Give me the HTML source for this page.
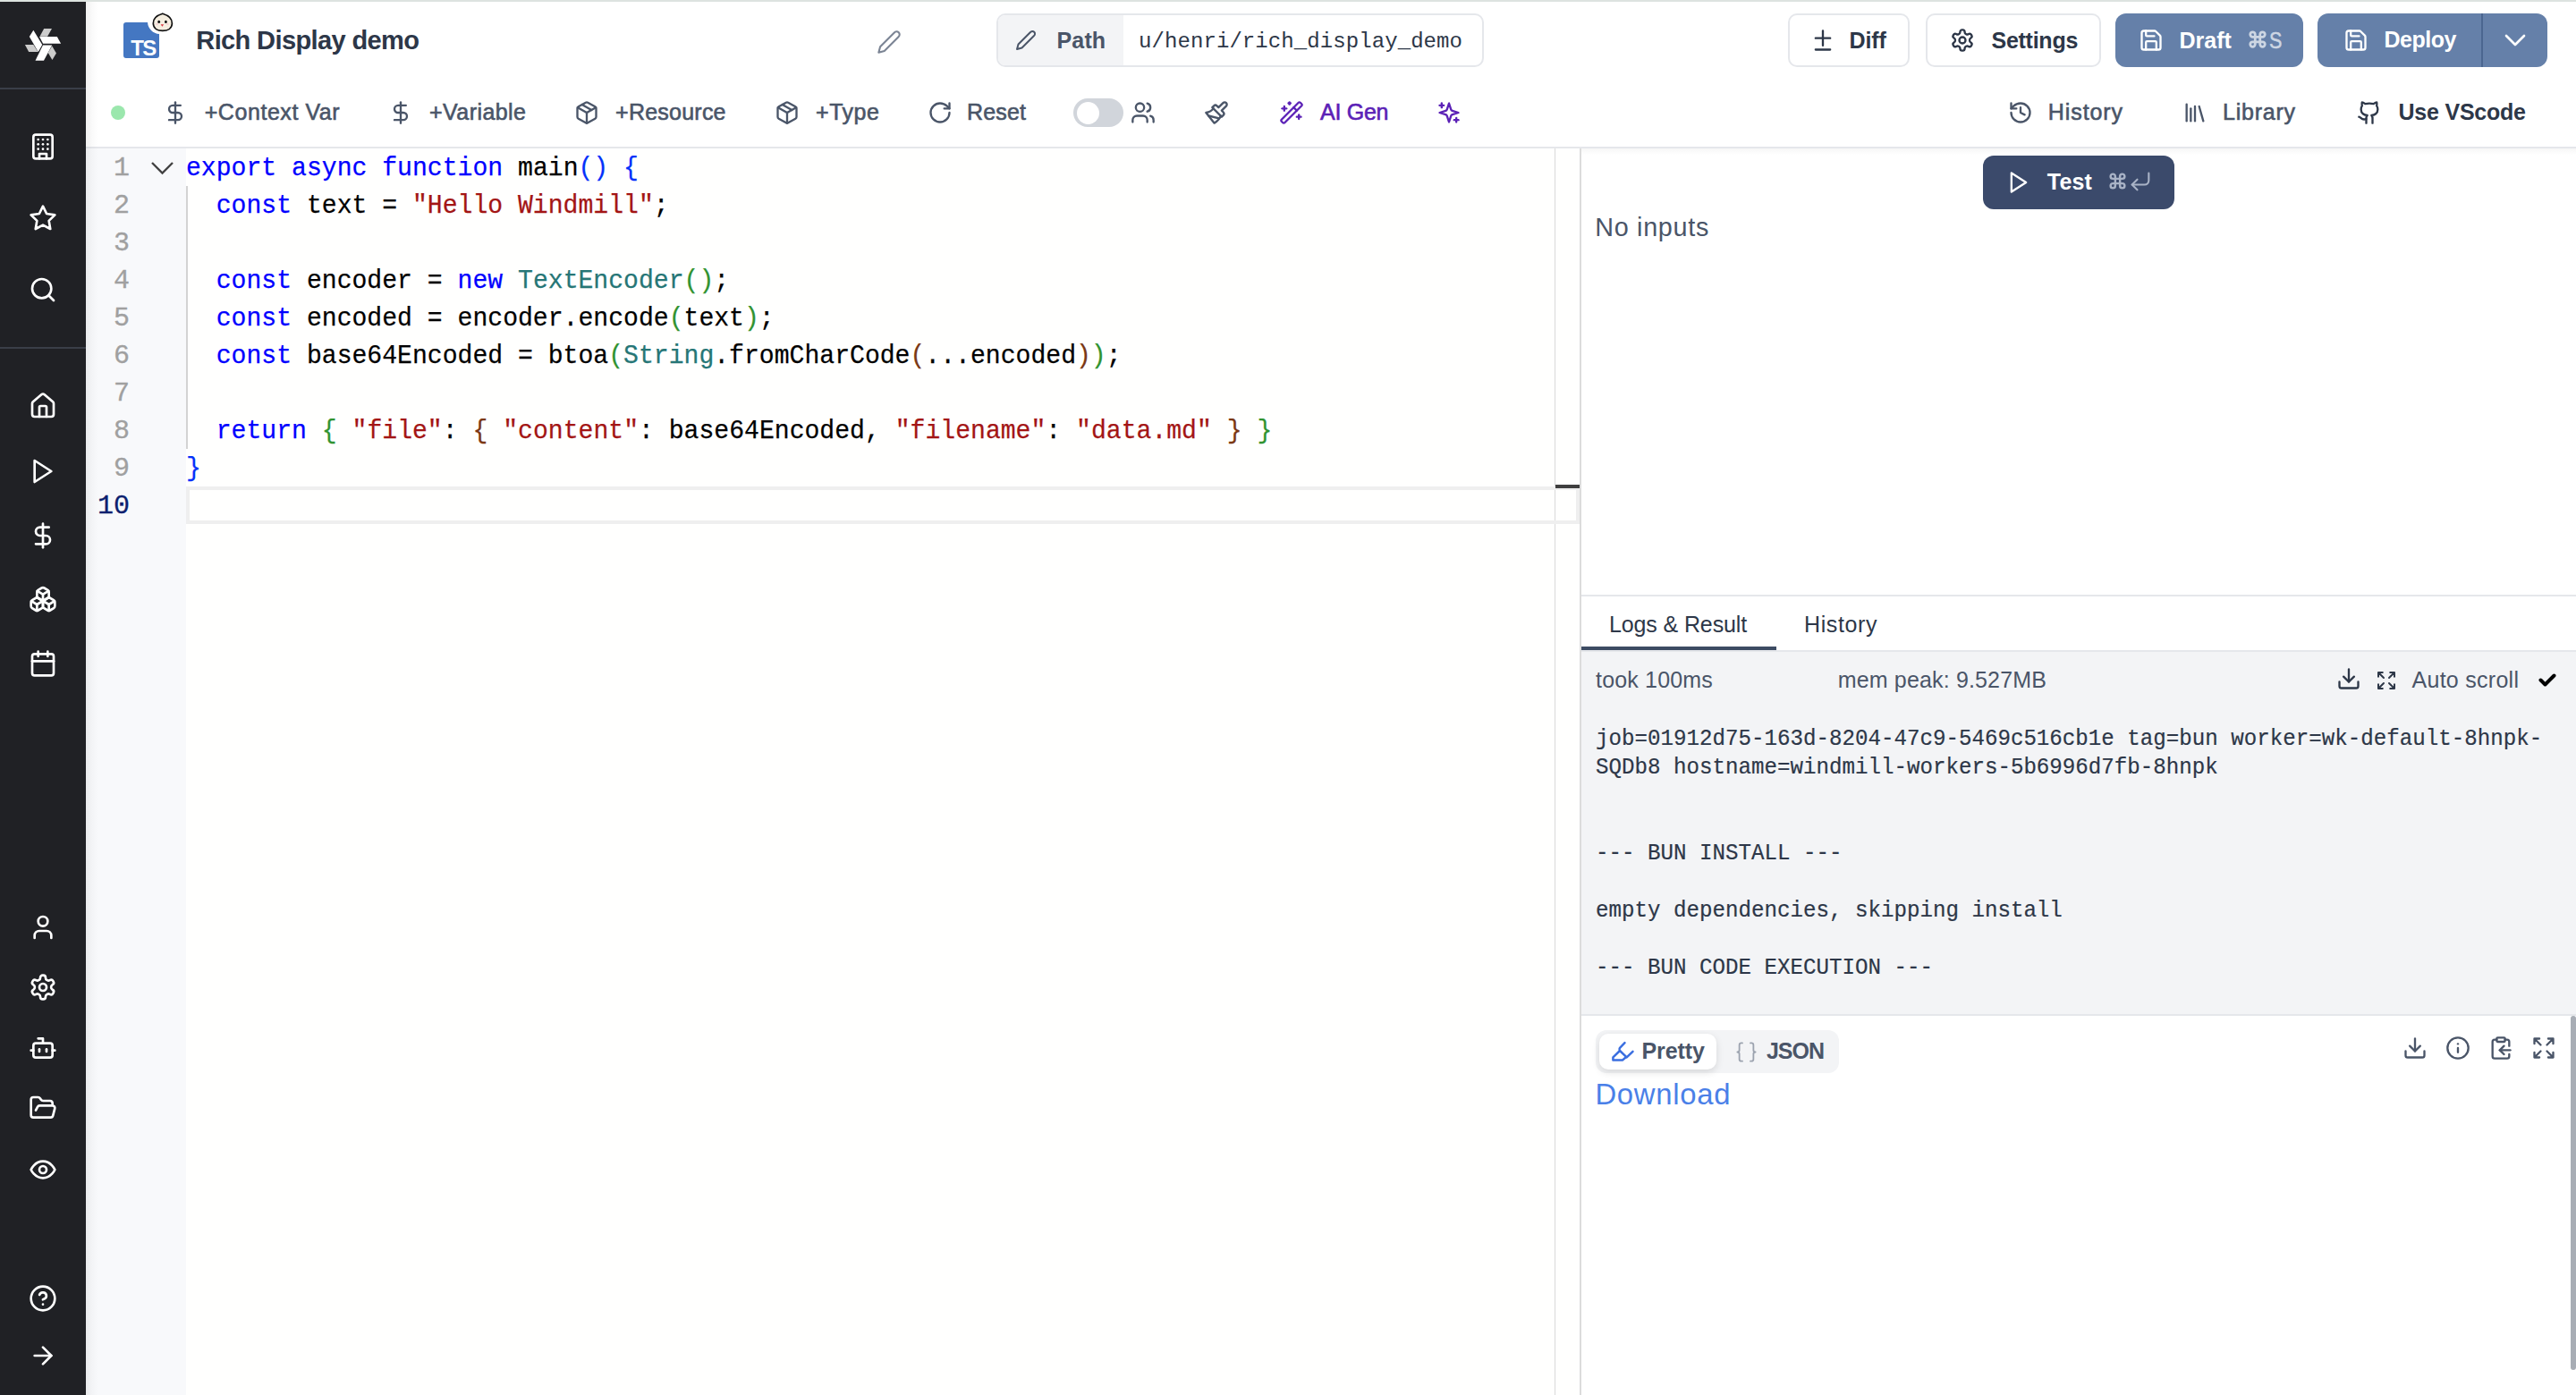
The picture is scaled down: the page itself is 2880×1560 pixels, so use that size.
<!DOCTYPE html>
<html><head><meta charset="utf-8"><title>Rich Display demo</title>
<style>
html,body{margin:0;padding:0}
body{width:2880px;height:1560px;overflow:hidden;position:relative;background:#ffffff;font-family:"Liberation Sans",sans-serif}
.b{position:absolute}
.i{position:absolute;overflow:visible}
.t{position:absolute;white-space:nowrap}
.code{position:absolute;left:208px;font-family:"Liberation Mono",monospace;font-size:30px;line-height:28px;white-space:pre;color:#000;transform:scaleX(0.9367);transform-origin:0 0;-webkit-text-stroke:0.25px currentColor}
.code i{font-style:normal}
.k{color:#0000ff}.s{color:#a31515}.ty{color:#267676}.b1{color:#0431fa}.b2{color:#319331}.b3{color:#7b3814}
.ln{position:absolute;left:60px;width:85px;text-align:right;font-family:"Liberation Mono",monospace;font-size:30px;line-height:28px;-webkit-text-stroke:0.3px currentColor}
.log{position:absolute;left:1784px;font-family:"Liberation Mono",monospace;font-size:26px;line-height:24px;white-space:pre;color:#2d3748;transform:scaleX(0.9291);transform-origin:0 0;-webkit-text-stroke:0.2px currentColor}
</style></head><body>
<div class="b" style="left:0px;top:0px;width:2880px;height:2px;background:#dde3e0"></div>
<div class="b" style="left:0px;top:2px;width:96px;height:1558px;background:#202125"></div>
<div class="b" style="left:0px;top:98px;width:96px;height:2px;background:#3a3e48"></div>
<div class="b" style="left:0px;top:388px;width:96px;height:2px;background:#3a3e48"></div>
<div class="b" style="left:96px;top:166px;width:1670px;height:1394px;background:#fffffe"></div>
<div class="b" style="left:96px;top:166px;width:112px;height:1394px;background:#f8f9fb"></div>
<div class="b" style="left:96px;top:164px;width:2784px;height:2px;background:#e5e7eb"></div>
<div class="b" style="left:1766px;top:166px;width:2px;height:1394px;background:#dcdcdc"></div>
<div class="b" style="left:1768px;top:166px;width:1112px;height:7px;background:linear-gradient(rgba(0,0,0,0.035), rgba(0,0,0,0))"></div>
<div class="b" style="left:1738px;top:166px;width:1px;height:1394px;background:#d9d9d9"></div>
<div class="b" style="left:208px;top:544px;width:1558px;height:42px;box-sizing:border-box;border:4px solid #efefef"></div>
<div class="b" style="left:1739px;top:542px;width:27px;height:4px;background:#3f3f3f"></div>
<div class="b" style="left:208px;top:208px;width:2px;height:294px;background:#d3d3d3"></div>
<div class="b" style="left:96px;top:2px;width:14px;height:1558px;background:linear-gradient(to right, rgba(0,0,0,0.06), rgba(0,0,0,0.02) 50%, rgba(0,0,0,0))"></div>
<svg class="i" style="left:18px;top:20px" width="60" height="60" viewBox="0 0 1395 1395">
<g fill="#ffffff"><polygon points="345,490 450,322 680,700 575,885"/><polygon points="605,490 1065,490 1165,670 700,670"/><polygon points="697,708 935,708 720,1112 500,1112"/></g>
<g fill="#cccccc"><polygon points="615,480 725,280 930,280 815,480"/><polygon points="230,700 450,700 570,885 330,885"/><polygon points="935,730 1045,920 940,1090 830,905"/></g></svg>
<svg class="i" style="left:32.0px;top:148.0px" width="32" height="32" viewBox="0 0 24 24" fill="none" stroke="#ffffff" stroke-width="2" stroke-linecap="round" stroke-linejoin="round"><rect width="16" height="20" x="4" y="2" rx="2" ry="2"/><path d="M9 22v-4h6v4"/><path d="M8 6h.01"/><path d="M16 6h.01"/><path d="M12 6h.01"/><path d="M12 10h.01"/><path d="M12 14h.01"/><path d="M16 10h.01"/><path d="M16 14h.01"/><path d="M8 10h.01"/><path d="M8 14h.01"/></svg>
<svg class="i" style="left:32.0px;top:227.5px" width="32" height="32" viewBox="0 0 24 24" fill="none" stroke="#ffffff" stroke-width="2" stroke-linecap="round" stroke-linejoin="round"><polygon points="12 2 15.09 8.26 22 9.27 17 14.14 18.18 21.02 12 17.77 5.82 21.02 7 14.14 2 9.27 8.91 8.26 12 2"/></svg>
<svg class="i" style="left:32.0px;top:308.0px" width="32" height="32" viewBox="0 0 24 24" fill="none" stroke="#ffffff" stroke-width="2" stroke-linecap="round" stroke-linejoin="round"><circle cx="11" cy="11" r="8"/><path d="m21 21-4.3-4.3"/></svg>
<svg class="i" style="left:32.0px;top:438.0px" width="32" height="32" viewBox="0 0 24 24" fill="none" stroke="#ffffff" stroke-width="2" stroke-linecap="round" stroke-linejoin="round"><path d="M15 21v-8a1 1 0 0 0-1-1h-4a1 1 0 0 0-1 1v8"/><path d="M3 10a2 2 0 0 1 .709-1.528l7-5.999a2 2 0 0 1 2.582 0l7 5.999A2 2 0 0 1 21 10v9a2 2 0 0 1-2 2H5a2 2 0 0 1-2-2z"/></svg>
<svg class="i" style="left:32.0px;top:510.5px" width="32" height="32" viewBox="0 0 24 24" fill="none" stroke="#ffffff" stroke-width="2" stroke-linecap="round" stroke-linejoin="round"><polygon points="5 3 19 12 5 21 5 3"/></svg>
<svg class="i" style="left:32.0px;top:582.7px" width="32" height="32" viewBox="0 0 24 24" fill="none" stroke="#ffffff" stroke-width="2" stroke-linecap="round" stroke-linejoin="round"><line x1="12" x2="12" y1="2" y2="22"/><path d="M17 5H9.5a3.5 3.5 0 0 0 0 7h5a3.5 3.5 0 0 1 0 7H6"/></svg>
<svg class="i" style="left:32.0px;top:654.0px" width="32" height="32" viewBox="0 0 24 24" fill="none" stroke="#ffffff" stroke-width="2" stroke-linecap="round" stroke-linejoin="round"><path d="M2.97 12.92A2 2 0 0 0 2 14.63v3.24a2 2 0 0 0 .97 1.71l3 1.8a2 2 0 0 0 2.06 0L12 19v-5.5l-5-3-4.03 2.42Z"/><path d="m7 16.5-4.74-2.85"/><path d="m7 16.5 5-3"/><path d="M7 16.5v5.17"/><path d="M12 13.5V19l3.97 2.38a2 2 0 0 0 2.06 0l3-1.8a2 2 0 0 0 .97-1.71v-3.24a2 2 0 0 0-.97-1.71L17 10.5l-5 3Z"/><path d="m17 16.5-5-3"/><path d="m17 16.5 4.74-2.85"/><path d="M17 16.5v5.17"/><path d="M7.97 4.42A2 2 0 0 0 7 6.13v4.37l5 3 5-3V6.13a2 2 0 0 0-.97-1.71l-3-1.8a2 2 0 0 0-2.06 0l-3 1.8Z"/><path d="M12 8 7.26 5.15"/><path d="m12 8 4.74-2.85"/><path d="M12 13.5V8"/></svg>
<svg class="i" style="left:32.0px;top:726.0px" width="32" height="32" viewBox="0 0 24 24" fill="none" stroke="#ffffff" stroke-width="2" stroke-linecap="round" stroke-linejoin="round"><rect width="18" height="18" x="3" y="4" rx="2" ry="2"/><line x1="16" x2="16" y1="2" y2="6"/><line x1="8" x2="8" y1="2" y2="6"/><line x1="3" x2="21" y1="10" y2="10"/></svg>
<svg class="i" style="left:32.0px;top:1020.5px" width="32" height="32" viewBox="0 0 24 24" fill="none" stroke="#ffffff" stroke-width="2" stroke-linecap="round" stroke-linejoin="round"><path d="M19 21v-2a4 4 0 0 0-4-4H9a4 4 0 0 0-4 4v2"/><circle cx="12" cy="7" r="4"/></svg>
<svg class="i" style="left:32.0px;top:1087.7px" width="32" height="32" viewBox="0 0 24 24" fill="none" stroke="#ffffff" stroke-width="2" stroke-linecap="round" stroke-linejoin="round"><path d="M12.22 2h-.44a2 2 0 0 0-2 2v.18a2 2 0 0 1-1 1.73l-.43.25a2 2 0 0 1-2 0l-.15-.08a2 2 0 0 0-2.73.73l-.22.38a2 2 0 0 0 .73 2.73l.15.1a2 2 0 0 1 1 1.72v.51a2 2 0 0 1-1 1.74l-.15.09a2 2 0 0 0-.73 2.73l.22.38a2 2 0 0 0 2.73.73l.15-.08a2 2 0 0 1 2 0l.43.25a2 2 0 0 1 1 1.73V20a2 2 0 0 0 2 2h.44a2 2 0 0 0 2-2v-.18a2 2 0 0 1 1-1.73l.43-.25a2 2 0 0 1 2 0l.15.08a2 2 0 0 0 2.73-.73l.22-.39a2 2 0 0 0-.73-2.73l-.15-.08a2 2 0 0 1-1-1.74v-.5a2 2 0 0 1 1-1.74l.15-.09a2 2 0 0 0 .73-2.73l-.22-.38a2 2 0 0 0-2.73-.73l-.15.08a2 2 0 0 1-2 0l-.43-.25a2 2 0 0 1-1-1.73V4a2 2 0 0 0-2-2z"/><circle cx="12" cy="12" r="3"/></svg>
<svg class="i" style="left:32.0px;top:1156.0px" width="32" height="32" viewBox="0 0 24 24" fill="none" stroke="#ffffff" stroke-width="2" stroke-linecap="round" stroke-linejoin="round"><path d="M12 8V4H8"/><rect width="16" height="12" x="4" y="8" rx="2"/><path d="M2 14h2"/><path d="M20 14h2"/><path d="M15 13v2"/><path d="M9 13v2"/></svg>
<svg class="i" style="left:32.0px;top:1223.0px" width="32" height="32" viewBox="0 0 24 24" fill="none" stroke="#ffffff" stroke-width="2" stroke-linecap="round" stroke-linejoin="round"><path d="m6 14 1.5-2.9A2 2 0 0 1 9.24 10H20a2 2 0 0 1 1.94 2.5l-1.54 6a2 2 0 0 1-1.95 1.5H4a2 2 0 0 1-2-2V5a2 2 0 0 1 2-2h3.9a2 2 0 0 1 1.69.9l.81 1.2a2 2 0 0 0 1.67.9H18a2 2 0 0 1 2 2v2"/></svg>
<svg class="i" style="left:32.0px;top:1292.0px" width="32" height="32" viewBox="0 0 24 24" fill="none" stroke="#ffffff" stroke-width="2" stroke-linecap="round" stroke-linejoin="round"><path d="M2 12s3-7 10-7 10 7 10 7-3 7-10 7-10-7-10-7Z"/><circle cx="12" cy="12" r="3"/></svg>
<svg class="i" style="left:32.0px;top:1436.0px" width="32" height="32" viewBox="0 0 24 24" fill="none" stroke="#ffffff" stroke-width="2" stroke-linecap="round" stroke-linejoin="round"><circle cx="12" cy="12" r="10"/><path d="M9.09 9a3 3 0 0 1 5.83 1c0 2-3 3-3 3"/><path d="M12 17h.01"/></svg>
<svg class="i" style="left:32.0px;top:1500.0px" width="32" height="32" viewBox="0 0 24 24" fill="none" stroke="#ffffff" stroke-width="2" stroke-linecap="round" stroke-linejoin="round"><path d="M5 12h14"/><path d="m12 5 7 7-7 7"/></svg>
<svg class="i" style="left:130px;top:10px" width="70" height="60" viewBox="0 0 70 60">
<path d="M11 15 H35 A14 14 0 0 0 48 28 V52 A3 3 0 0 1 45 55 H11 A3 3 0 0 1 8 52 V18 A3 3 0 0 1 11 15 Z" fill="#4477c2"/>
<text x="16.3" y="51.5" font-family="Liberation Sans" font-weight="700" font-size="24" fill="#fff" letter-spacing="-1.6">TS</text>
<path d="M41.3 16.2 C41 10.5 46.5 6.8 51.8 5.2 C57 6.8 62.6 10.5 62.4 16.2 C62.3 22 57.2 24.4 51.8 24.4 C46.4 24.4 41.5 22 41.3 16.2 Z" fill="#f5eee0" stroke="#111" stroke-width="1.7"/>
<ellipse cx="47.7" cy="14.4" rx="1.4" ry="1.6" fill="#111"/><ellipse cx="55.4" cy="14.4" rx="1.4" ry="1.6" fill="#111"/>
<path d="M49.6 17.2 L53.2 17.2 L51.4 19.8 Z" fill="#d9343f"/>
<ellipse cx="45.6" cy="17" rx="1.5" ry="0.8" fill="#f6c4cf"/><ellipse cx="57.4" cy="17" rx="1.5" ry="0.8" fill="#f6c4cf"/>
</svg>
<svg class="i" style="left:980.0px;top:32.9px" width="28" height="28" viewBox="0 0 24 24" fill="none" stroke="#7b8494" stroke-width="1.8" stroke-linecap="round" stroke-linejoin="round"><path d="M17 3a2.85 2.83 0 1 1 4 4L7.5 20.5 2 22l1.5-5.5Z"/></svg>
<div class="b" style="left:1114px;top:15px;width:545px;height:60px;box-sizing:border-box;border:2px solid #e5e7eb;border-radius:10px"></div>
<div class="b" style="left:1116px;top:17px;width:140px;height:56px;background:#f3f4f6;border-radius:8px 0 0 8px"></div>
<svg class="i" style="left:1135.4px;top:33.0px" width="24" height="24" viewBox="0 0 24 24" fill="none" stroke="#4a5568" stroke-width="2" stroke-linecap="round" stroke-linejoin="round"><path d="M17 3a2.85 2.83 0 1 1 4 4L7.5 20.5 2 22l1.5-5.5Z"/></svg>
<div class="t" style="left:1273px;top:34.9px;font-family:'Liberation Mono';font-size:24px;line-height:24px;letter-spacing:0.08px;color:#2d3748">u/henri/rich_display_demo</div>
<div class="b" style="left:1999px;top:15px;width:136px;height:60px;box-sizing:border-box;border:2px solid #e5e7eb;border-radius:10px"></div>
<svg class="i" style="left:2023.8px;top:31.0px" width="28" height="28" viewBox="0 0 24 24" fill="none" stroke="#2d3748" stroke-width="2" stroke-linecap="round" stroke-linejoin="round"><path d="M12 3v14"/><path d="M5 10h14"/><path d="M5 21h14"/></svg>
<div class="b" style="left:2153px;top:15px;width:196px;height:60px;box-sizing:border-box;border:2px solid #e5e7eb;border-radius:10px"></div>
<svg class="i" style="left:2179.9px;top:31.0px" width="28" height="28" viewBox="0 0 24 24" fill="none" stroke="#2d3748" stroke-width="2" stroke-linecap="round" stroke-linejoin="round"><path d="M12.22 2h-.44a2 2 0 0 0-2 2v.18a2 2 0 0 1-1 1.73l-.43.25a2 2 0 0 1-2 0l-.15-.08a2 2 0 0 0-2.73.73l-.22.38a2 2 0 0 0 .73 2.73l.15.1a2 2 0 0 1 1 1.72v.51a2 2 0 0 1-1 1.74l-.15.09a2 2 0 0 0-.73 2.73l.22.38a2 2 0 0 0 2.73.73l.15-.08a2 2 0 0 1 2 0l.43.25a2 2 0 0 1 1 1.73V20a2 2 0 0 0 2 2h.44a2 2 0 0 0 2-2v-.18a2 2 0 0 1 1-1.73l.43-.25a2 2 0 0 1 2 0l.15.08a2 2 0 0 0 2.73-.73l.22-.39a2 2 0 0 0-.73-2.73l-.15-.08a2 2 0 0 1-1-1.74v-.5a2 2 0 0 1 1-1.74l.15-.09a2 2 0 0 0 .73-2.73l-.22-.38a2 2 0 0 0-2.73-.73l-.15.08a2 2 0 0 1-2 0l-.43-.25a2 2 0 0 1-1-1.73V4a2 2 0 0 0-2-2z"/><circle cx="12" cy="12" r="3"/></svg>
<div class="b" style="left:2365px;top:15px;width:210px;height:60px;background:#6580a9;border-radius:12px"></div>
<svg class="i" style="left:2391.0px;top:31.0px" width="28" height="28" viewBox="0 0 24 24" fill="none" stroke="#ffffff" stroke-width="2" stroke-linecap="round" stroke-linejoin="round"><path d="M15.2 3a2 2 0 0 1 1.4.6l3.8 3.8a2 2 0 0 1 .6 1.4V19a2 2 0 0 1-2 2H5a2 2 0 0 1-2-2V5a2 2 0 0 1 2-2z"/><path d="M17 21v-7a1 1 0 0 0-1-1H8a1 1 0 0 0-1 1v7"/><path d="M7 3v4a1 1 0 0 0 1 1h7"/></svg>
<svg class="i" style="left:2512.5px;top:33.2px" width="22" height="22" viewBox="0 0 24 24" fill="none" stroke="#cdd6e3" stroke-width="3" stroke-linecap="round" stroke-linejoin="round"><path d="M15 6v12a3 3 0 1 0 3-3H6a3 3 0 1 0 3 3V6a3 3 0 1 0-3 3h12a3 3 0 1 0-3-3"/></svg>
<div class="b" style="left:2591px;top:15px;width:257px;height:60px;background:#6580a9;border-radius:12px"></div>
<div class="b" style="left:2774px;top:15px;width:2px;height:60px;background:#4b6690"></div>
<svg class="i" style="left:2619.9px;top:30.8px" width="28" height="28" viewBox="0 0 24 24" fill="none" stroke="#ffffff" stroke-width="2" stroke-linecap="round" stroke-linejoin="round"><path d="M15.2 3a2 2 0 0 1 1.4.6l3.8 3.8a2 2 0 0 1 .6 1.4V19a2 2 0 0 1-2 2H5a2 2 0 0 1-2-2V5a2 2 0 0 1 2-2z"/><path d="M17 21v-7a1 1 0 0 0-1-1H8a1 1 0 0 0-1 1v7"/><path d="M7 3v4a1 1 0 0 0 1 1h7"/></svg>
<svg class="i" style="left:2791.5px;top:25.0px" width="40" height="40" viewBox="0 0 24 24" fill="none" stroke="#ffffff" stroke-width="1.6" stroke-linecap="round" stroke-linejoin="round"><path d="m6 9 6 6 6-6"/></svg>
<div class="b" style="left:124px;top:118px;width:16px;height:16px;background:#9be7ad;border-radius:50%"></div>
<svg class="i" style="left:181.8px;top:112.0px" width="28" height="28" viewBox="0 0 24 24" fill="none" stroke="#4a5568" stroke-width="2" stroke-linecap="round" stroke-linejoin="round"><line x1="12" x2="12" y1="2" y2="22"/><path d="M17 5H9.5a3.5 3.5 0 0 0 0 7h5a3.5 3.5 0 0 1 0 7H6"/></svg>
<svg class="i" style="left:433.8px;top:112.0px" width="28" height="28" viewBox="0 0 24 24" fill="none" stroke="#4a5568" stroke-width="2" stroke-linecap="round" stroke-linejoin="round"><line x1="12" x2="12" y1="2" y2="22"/><path d="M17 5H9.5a3.5 3.5 0 0 0 0 7h5a3.5 3.5 0 0 1 0 7H6"/></svg>
<svg class="i" style="left:642.0px;top:112.0px" width="28" height="28" viewBox="0 0 24 24" fill="none" stroke="#4a5568" stroke-width="2" stroke-linecap="round" stroke-linejoin="round"><path d="m7.5 4.27 9 5.15"/><path d="M21 8a2 2 0 0 0-1-1.73l-7-4a2 2 0 0 0-2 0l-7 4A2 2 0 0 0 3 8v8a2 2 0 0 0 1 1.73l7 4a2 2 0 0 0 2 0l7-4A2 2 0 0 0 21 16Z"/><path d="m3.3 7 8.7 5 8.7-5"/><path d="M12 22V12"/></svg>
<svg class="i" style="left:866.0px;top:112.0px" width="28" height="28" viewBox="0 0 24 24" fill="none" stroke="#4a5568" stroke-width="2" stroke-linecap="round" stroke-linejoin="round"><path d="m7.5 4.27 9 5.15"/><path d="M21 8a2 2 0 0 0-1-1.73l-7-4a2 2 0 0 0-2 0l-7 4A2 2 0 0 0 3 8v8a2 2 0 0 0 1 1.73l7 4a2 2 0 0 0 2 0l7-4A2 2 0 0 0 21 16Z"/><path d="m3.3 7 8.7 5 8.7-5"/><path d="M12 22V12"/></svg>
<svg class="i" style="left:1037.0px;top:112.0px" width="28" height="28" viewBox="0 0 24 24" fill="none" stroke="#4a5568" stroke-width="2" stroke-linecap="round" stroke-linejoin="round"><path d="M21 12a9 9 0 1 1-9-9c2.52 0 4.93 1 6.74 2.74L21 8"/><path d="M21 3v5h-5"/></svg>
<div class="b" style="left:1200px;top:110px;width:56px;height:32px;background:#d1d5db;border-radius:16px"></div>
<div class="b" style="left:1203.5px;top:113.5px;width:25px;height:25px;background:#ffffff;border-radius:50%"></div>
<svg class="i" style="left:1263.9px;top:112.0px" width="28" height="28" viewBox="0 0 24 24" fill="none" stroke="#4a5568" stroke-width="2" stroke-linecap="round" stroke-linejoin="round"><path d="M16 21v-2a4 4 0 0 0-4-4H6a4 4 0 0 0-4 4v2"/><circle cx="9" cy="7" r="4"/><path d="M22 21v-2a4 4 0 0 0-3-3.87"/><path d="M16 3.13a4 4 0 0 1 0 7.75"/></svg>
<svg class="i" style="left:1346.4px;top:112.0px" width="28" height="28" viewBox="0 0 24 24" fill="none" stroke="#4a5568" stroke-width="2" stroke-linecap="round" stroke-linejoin="round"><path d="M18.37 2.63 14 7l-1.59-1.59a2 2 0 0 0-2.82 0L8 7l9 9 1.59-1.59a2 2 0 0 0 0-2.82L17 10l4.37-4.37a2.12 2.12 0 1 0-3-3Z"/><path d="M9 8c-2 3-4 3.5-7 4l8 10c2-1 6-5 6-7"/><path d="M14.5 17.5 4.5 15"/></svg>
<svg class="i" style="left:1429.7px;top:112.0px" width="28" height="28" viewBox="0 0 24 24" fill="none" stroke="#5b21b6" stroke-width="2" stroke-linecap="round" stroke-linejoin="round"><path d="m21.64 3.64-1.28-1.28a1.21 1.21 0 0 0-1.72 0L2.36 18.64a1.21 1.21 0 0 0 0 1.72l1.28 1.28a1.2 1.2 0 0 0 1.72 0L21.64 5.36a1.2 1.2 0 0 0 0-1.72"/><path d="m14 7 3 3"/><path d="M5 6v4"/><path d="M19 14v4"/><path d="M10 2v2"/><path d="M7 8H3"/><path d="M21 16h-4"/><path d="M11 3H9"/></svg>
<svg class="i" style="left:1605.8px;top:112.0px" width="28" height="28" viewBox="0 0 24 24" fill="none" stroke="#5b21b6" stroke-width="2" stroke-linecap="round" stroke-linejoin="round"><path d="m12 3-1.912 5.813a2 2 0 0 1-1.275 1.275L3 12l5.813 1.912a2 2 0 0 1 1.275 1.275L12 21l1.912-5.813a2 2 0 0 1 1.275-1.275L21 12l-5.813-1.912a2 2 0 0 1-1.275-1.275L12 3Z"/><path d="M5 3v4"/><path d="M19 17v4"/><path d="M3 5h4"/><path d="M17 19h4"/></svg>
<svg class="i" style="left:2244.8px;top:112.0px" width="28" height="28" viewBox="0 0 24 24" fill="none" stroke="#4a5568" stroke-width="2" stroke-linecap="round" stroke-linejoin="round"><path d="M3 12a9 9 0 1 0 9-9 9.75 9.75 0 0 0-6.74 2.74L3 8"/><path d="M3 3v5h5"/><path d="M12 7v5l4 2"/></svg>
<svg class="i" style="left:2439.9px;top:112.0px" width="28" height="28" viewBox="0 0 24 24" fill="none" stroke="#4a5568" stroke-width="2" stroke-linecap="round" stroke-linejoin="round"><path d="m16 6 4 14"/><path d="M12 6v14"/><path d="M8 8v12"/><path d="M4 4v16"/></svg>
<svg class="i" style="left:2634.9px;top:112.0px" width="28" height="28" viewBox="0 0 24 24" fill="none" stroke="#2d3748" stroke-width="2" stroke-linecap="round" stroke-linejoin="round"><path d="M15 22v-4a4.8 4.8 0 0 0-1-3.5c3 0 6-2 6-5.5.08-1.25-.27-2.48-1-3.5.28-1.15.28-2.35 0-3.5 0 0-1 0-3 1.5-2.64-.5-5.36-.5-8 0C6 2 5 2 5 2c-.3 1.15-.3 2.35 0 3.5A5.403 5.403 0 0 0 4 9c0 3.5 3 5.5 6 5.5-.39.49-.68 1.05-.85 1.65-.17.6-.22 1.23-.15 1.85v4"/><path d="M9 18c-4.51 2-5-2-7-2"/></svg>
<div class="code" style="top:173.7px"><i class="k">export</i> <i class="k">async</i> <i class="k">function</i> main<i class="b1">()</i> <i class="b1">{</i></div>
<div class="ln" style="top:173.7px;color:#a0a0a0">1</div>
<div class="code" style="top:215.7px">  <i class="k">const</i> text = <i class="s">"Hello Windmill"</i>;</div>
<div class="ln" style="top:215.7px;color:#a0a0a0">2</div>
<div class="code" style="top:257.7px"></div>
<div class="ln" style="top:257.7px;color:#a0a0a0">3</div>
<div class="code" style="top:299.7px">  <i class="k">const</i> encoder = <i class="k">new</i> <i class="ty">TextEncoder</i><i class="b2">()</i>;</div>
<div class="ln" style="top:299.7px;color:#a0a0a0">4</div>
<div class="code" style="top:341.7px">  <i class="k">const</i> encoded = encoder.encode<i class="b2">(</i>text<i class="b2">)</i>;</div>
<div class="ln" style="top:341.7px;color:#a0a0a0">5</div>
<div class="code" style="top:383.7px">  <i class="k">const</i> base64Encoded = btoa<i class="b2">(</i><i class="ty">String</i>.fromCharCode<i class="b3">(</i>...encoded<i class="b3">)</i><i class="b2">)</i>;</div>
<div class="ln" style="top:383.7px;color:#a0a0a0">6</div>
<div class="code" style="top:425.7px"></div>
<div class="ln" style="top:425.7px;color:#a0a0a0">7</div>
<div class="code" style="top:467.7px">  <i class="k">return</i> <i class="b2">{</i> <i class="s">"file"</i>: <i class="b3">{</i> <i class="s">"content"</i>: base64Encoded, <i class="s">"filename"</i>: <i class="s">"data.md"</i> <i class="b3">}</i> <i class="b2">}</i></div>
<div class="ln" style="top:467.7px;color:#a0a0a0">8</div>
<div class="code" style="top:509.7px"><i class="b1">}</i></div>
<div class="ln" style="top:509.7px;color:#a0a0a0">9</div>
<div class="code" style="top:551.7px"></div>
<div class="ln" style="top:551.7px;color:#0b216f">10</div>
<svg class="i" style="left:168px;top:178px" width="27" height="18" viewBox="0 0 27 18"><polyline points="2,4 13.5,15.5 25,4" fill="none" stroke="#424242" stroke-width="2.4"/></svg>
<div class="b" style="left:2217px;top:174px;width:214px;height:60px;background:#3b4a6b;border-radius:12px"></div>
<svg class="i" style="left:2243.0px;top:189.9px" width="28" height="28" viewBox="0 0 24 24" fill="none" stroke="#ffffff" stroke-width="2" stroke-linecap="round" stroke-linejoin="round"><polygon points="5 3 19 12 5 21 5 3"/></svg>
<svg class="i" style="left:2356.5px;top:192.2px" width="21" height="21" viewBox="0 0 24 24" fill="none" stroke="#a9b3c6" stroke-width="2.8" stroke-linecap="round" stroke-linejoin="round"><path d="M15 6v12a3 3 0 1 0 3-3H6a3 3 0 1 0 3 3V6a3 3 0 1 0-3 3h12a3 3 0 1 0-3-3"/></svg>
<svg class="i" style="left:2379px;top:188.5px" width="28" height="28" viewBox="0 0 24 24" fill="none" stroke="#a9b3c6" stroke-width="1.8" stroke-linecap="round" stroke-linejoin="round"><polyline points="9 10 4 15 9 20"/><path d="M20 4v7a4 4 0 0 1-4 4H4"/></svg>
<div class="b" style="left:1768px;top:665px;width:1112px;height:2px;background:#e5e7eb"></div>
<div class="b" style="left:1768px;top:727px;width:1112px;height:2px;background:#e5e7eb"></div>
<div class="b" style="left:1768px;top:723px;width:218px;height:4px;background:#3d4b63"></div>
<div class="b" style="left:1768px;top:729px;width:1112px;height:405px;background:#f3f4f6"></div>
<div class="b" style="left:1768px;top:1134px;width:1112px;height:2px;background:#e5e7eb"></div>
<svg class="i" style="left:2611.9px;top:745.4px" width="28" height="28" viewBox="0 0 24 24" fill="none" stroke="#2d3748" stroke-width="2" stroke-linecap="round" stroke-linejoin="round"><path d="M21 15v4a2 2 0 0 1-2 2H5a2 2 0 0 1-2-2v-4"/><polyline points="7 10 12 15 17 10"/><line x1="12" x2="12" y1="15" y2="3"/></svg>
<svg class="i" style="left:2656.0px;top:749.0px" width="24" height="24" viewBox="0 0 24 24" fill="none" stroke="#2d3748" stroke-width="2" stroke-linecap="round" stroke-linejoin="round"><path d="m21 21-6-6m6 6v-4.8m0 4.8h-4.8"/><path d="M3 16.2V21m0 0h4.8M3 21l6-6"/><path d="M21 7.8V3m0 0h-4.8M21 3l-6 6"/><path d="M3 7.8V3m0 0h4.8M3 3l6 6"/></svg>
<svg class="i" style="left:2836px;top:750px" width="24" height="20" viewBox="0 0 24 20"><polyline points="4.5,10.5 9.5,15.5 19.5,5.5" fill="none" stroke="#000" stroke-width="4" stroke-linecap="round" stroke-linejoin="round"/></svg>
<div class="log" style="top:813.7px">job=01912d75-163d-8204-47c9-5469c516cb1e tag=bun worker=wk-default-8hnpk-</div>
<div class="log" style="top:845.7px">SQDb8 hostname=windmill-workers-5b6996d7fb-8hnpk</div>
<div class="log" style="top:942.1px">--- BUN INSTALL ---</div>
<div class="log" style="top:1006.1px">empty dependencies, skipping install</div>
<div class="log" style="top:1070.1px">--- BUN CODE EXECUTION ---</div>
<div class="b" style="left:1784px;top:1152px;width:272px;height:48px;background:#f3f4f6;border-radius:12px"></div>
<div class="b" style="left:1788px;top:1156px;width:131px;height:40px;background:#ffffff;border-radius:10px;box-shadow:0 3px 8px rgba(0,0,0,0.12)"></div>
<svg class="i" style="left:1795px;top:1160px" width="40" height="30" viewBox="1795 1160 40 30"><g fill="none" stroke="#3b6fe0" stroke-width="2.5" stroke-linecap="round" stroke-linejoin="round"><path d="M1816.5 1166.2 L1811 1171.8 Q1809.8 1173.5 1811 1175 L1818.7 1182.4 L1825.5 1175.9"/><path d="M1811 1175 L1803.4 1182.4 L1803.4 1185.6 L1813.9 1185.6 L1817.8 1182.2"/></g></svg>
<svg class="i" style="left:1938.9px;top:1162.5px" width="27" height="27" viewBox="0 0 24 24" fill="none" stroke="#9ca3af" stroke-width="1.6" stroke-linecap="round" stroke-linejoin="round"><path d="M8 3H7a2 2 0 0 0-2 2v5a2 2 0 0 1-2 2 2 2 0 0 1 2 2v5c0 1.1.9 2 2 2h1"/><path d="M16 21h1a2 2 0 0 0 2-2v-5c0-1.1.9-2 2-2a2 2 0 0 1-2-2V5a2 2 0 0 0-2-2h-1"/></svg>
<svg class="i" style="left:2686.0px;top:1157.8px" width="28" height="28" viewBox="0 0 24 24" fill="none" stroke="#4a5568" stroke-width="2" stroke-linecap="round" stroke-linejoin="round"><path d="M21 15v4a2 2 0 0 1-2 2H5a2 2 0 0 1-2-2v-4"/><polyline points="7 10 12 15 17 10"/><line x1="12" x2="12" y1="15" y2="3"/></svg>
<svg class="i" style="left:2734.0px;top:1157.8px" width="28" height="28" viewBox="0 0 24 24" fill="none" stroke="#4a5568" stroke-width="2" stroke-linecap="round" stroke-linejoin="round"><circle cx="12" cy="12" r="10"/><path d="M12 16v-4"/><path d="M12 8h.01"/></svg>
<svg class="i" style="left:2782.2px;top:1157.8px" width="28" height="28" viewBox="0 0 24 24" fill="none" stroke="#4a5568" stroke-width="2" stroke-linecap="round" stroke-linejoin="round"><rect width="8" height="4" x="8" y="2" rx="1" ry="1"/><path d="M8 4H6a2 2 0 0 0-2 2v14a2 2 0 0 0 2 2h12a2 2 0 0 0 2-2v-2"/><path d="M16 4h2a2 2 0 0 1 2 2v4"/><path d="M21 14H11"/><path d="m15 10-4 4 4 4"/></svg>
<svg class="i" style="left:2830.0px;top:1157.8px" width="28" height="28" viewBox="0 0 24 24" fill="none" stroke="#4a5568" stroke-width="2" stroke-linecap="round" stroke-linejoin="round"><path d="m21 21-6-6m6 6v-4.8m0 4.8h-4.8"/><path d="M3 16.2V21m0 0h4.8M3 21l6-6"/><path d="M21 7.8V3m0 0h-4.8M21 3l-6 6"/><path d="M3 7.8V3m0 0h4.8M3 3l6 6"/></svg>
<div class="b" style="left:2874px;top:1136px;width:6px;height:396px;background:#a8adb5;border-radius:3px"></div>
<div class="t" style="left:219.3px;top:31.3px;font-size:29.05px;line-height:29.05px;font-weight:700;color:#2d3748;letter-spacing:-0.64px;">Rich Display demo</div>
<div class="t" style="left:1181.5px;top:33.4px;font-size:25.00px;line-height:25.00px;font-weight:700;color:#4a5568;letter-spacing:0.15px;">Path</div>
<div class="t" style="left:2067.5px;top:33.4px;font-size:25.00px;line-height:25.00px;font-weight:700;color:#2d3748;letter-spacing:-0.11px;">Diff</div>
<div class="t" style="left:2226.5px;top:33.4px;font-size:25.00px;line-height:25.00px;font-weight:700;color:#2d3748;letter-spacing:-0.26px;">Settings</div>
<div class="t" style="left:2436.5px;top:33.4px;font-size:25.00px;line-height:25.00px;font-weight:700;color:#ffffff;letter-spacing:0.01px;">Draft</div>
<div class="t" style="left:2537.0px;top:33.4px;font-size:25.00px;line-height:25.00px;font-weight:400;color:#b6c3d8;letter-spacing:-2.05px;transform:scaleX(0.86);transform-origin:0 0;color:#cdd6e3;-webkit-text-stroke:0.5px #cdd6e3;">S</div>
<div class="t" style="left:2665.5px;top:32.1px;font-size:25.00px;line-height:25.00px;font-weight:700;color:#ffffff;letter-spacing:-0.47px;">Deploy</div>
<div class="t" style="left:228.7px;top:112.6px;font-size:25.00px;line-height:25.00px;font-weight:400;color:#4a5568;letter-spacing:0.56px;-webkit-text-stroke:0.6px #4a5568;">+Context Var</div>
<div class="t" style="left:480.1px;top:112.6px;font-size:25.00px;line-height:25.00px;font-weight:400;color:#4a5568;letter-spacing:0.43px;-webkit-text-stroke:0.6px #4a5568;">+Variable</div>
<div class="t" style="left:688.1px;top:112.6px;font-size:25.00px;line-height:25.00px;font-weight:400;color:#4a5568;letter-spacing:0.23px;-webkit-text-stroke:0.6px #4a5568;">+Resource</div>
<div class="t" style="left:912.0px;top:112.6px;font-size:25.00px;line-height:25.00px;font-weight:400;color:#4a5568;letter-spacing:0.53px;-webkit-text-stroke:0.6px #4a5568;">+Type</div>
<div class="t" style="left:1081.0px;top:112.6px;font-size:25.00px;line-height:25.00px;font-weight:400;color:#4a5568;letter-spacing:0.16px;-webkit-text-stroke:0.6px #4a5568;">Reset</div>
<div class="t" style="left:1476.0px;top:112.6px;font-size:25.00px;line-height:25.00px;font-weight:400;color:#5b21b6;letter-spacing:-0.28px;-webkit-text-stroke:0.6px #5b21b6;">AI Gen</div>
<div class="t" style="left:2289.8px;top:112.6px;font-size:25.00px;line-height:25.00px;font-weight:400;color:#4a5568;letter-spacing:0.92px;-webkit-text-stroke:0.6px #4a5568;">History</div>
<div class="t" style="left:2485.0px;top:112.6px;font-size:25.00px;line-height:25.00px;font-weight:400;color:#4a5568;letter-spacing:0.76px;-webkit-text-stroke:0.6px #4a5568;">Library</div>
<div class="t" style="left:2681.5px;top:112.6px;font-size:25.00px;line-height:25.00px;font-weight:700;color:#2d3748;letter-spacing:-0.22px;">Use VScode</div>
<div class="t" style="left:2288.8px;top:190.8px;font-size:25.00px;line-height:25.00px;font-weight:700;color:#ffffff;letter-spacing:0.19px;">Test</div>
<div class="t" style="left:1783.2px;top:240.1px;font-size:28.77px;line-height:28.77px;font-weight:400;color:#4a5568;letter-spacing:0.70px;">No inputs</div>
<div class="t" style="left:1799.0px;top:685.8px;font-size:25.00px;line-height:25.00px;font-weight:400;color:#2d3748;letter-spacing:-0.12px;">Logs &amp; Result</div>
<div class="t" style="left:2017.0px;top:685.8px;font-size:25.00px;line-height:25.00px;font-weight:400;color:#2d3748;letter-spacing:0.62px;">History</div>
<div class="t" style="left:1784.1px;top:747.8px;font-size:25.00px;line-height:25.00px;font-weight:400;color:#4a5568;letter-spacing:0.16px;">took 100ms</div>
<div class="t" style="left:2054.7px;top:747.8px;font-size:25.00px;line-height:25.00px;font-weight:400;color:#4a5568;letter-spacing:0.16px;">mem peak: 9.527MB</div>
<div class="t" style="left:2696.5px;top:747.8px;font-size:25.00px;line-height:25.00px;font-weight:400;color:#4a5568;letter-spacing:0.28px;">Auto scroll</div>
<div class="t" style="left:1835.5px;top:1163.0px;font-size:25.00px;line-height:25.00px;font-weight:700;color:#4a5568;letter-spacing:-0.09px;">Pretty</div>
<div class="t" style="left:1974.9px;top:1163.0px;font-size:25.00px;line-height:25.00px;font-weight:700;color:#4a5568;letter-spacing:-0.96px;">JSON</div>
<div class="t" style="left:1783.4px;top:1208.0px;font-size:32.82px;line-height:32.82px;font-weight:400;color:#4a80e8;letter-spacing:0.74px;">Download</div>
<script>(function(){var w=window.innerWidth;if(w&&Math.abs(w-2880)>2){document.documentElement.style.zoom=String(w/2880);}})();</script>
</body></html>
